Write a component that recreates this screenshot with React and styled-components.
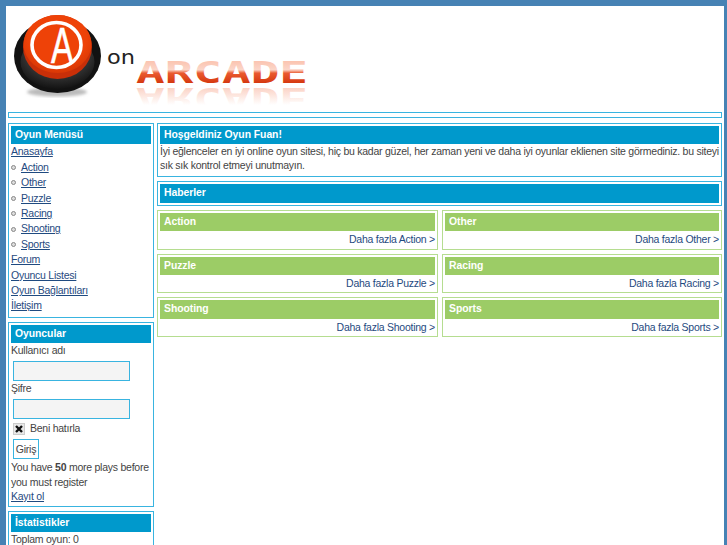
import React from 'react'
import styled, { createGlobalStyle } from 'styled-components'

const Global = createGlobalStyle`
  html, body { margin: 0; padding: 0; height: 545px; overflow: hidden; background: #4682b4; }
  body { font-family: "Liberation Sans", Arial, sans-serif; font-size: 10.5px; letter-spacing: -0.25px; line-height: 15.4px; color: #444; }
  a { color: #1f4a80; }
`

const Page = styled.div`
  margin: 6px 3px 0 6px;
  padding: 0 2px;
  background: #fff;
  height: 600px;
`
const Logo = styled.svg`
  display: block;
  width: 312px;
  height: 106px;
  letter-spacing: 0;
`
const Bar = styled.div`
  height: 4px;
  border: 1px solid #39b4e0;
  margin-bottom: 5px;
`
const Columns = styled.div`
  display: grid;
  grid-template-columns: 146px 1fr;
  column-gap: 3px;
  align-items: start;
`
const Stack = styled.div`
  display: flex;
  flex-direction: column;
  gap: 4px;
`
const Box = styled.section`
  border: 1px solid ${p => (p.$green ? '#b5dd90' : '#39b4e0')};
  padding: 2px;
`
const BoxTitle = styled.h3`
  margin: 0;
  height: 18.4px;
  padding: 0 4px;
  font-size: 10.4px;
  line-height: 17.4px;
  font-weight: bold;
  letter-spacing: -0.05px;
  color: #fff;
  background: ${p => (p.$green ? '#9ccc66' : '#0099cc')};
`
const Body = styled.div`
  padding: 0 0 1.2px;
`
const LoginBody = styled.div`
  padding: 0;
`
const MenuLink = styled.a`
  display: block;
  text-decoration: underline;
`
const SubItem = styled.div`
  display: flex;
  align-items: center;
  &::before {
    content: '';
    box-sizing: border-box;
    width: 5px;
    height: 5px;
    border: 1px solid #888;
    border-radius: 50%;
    background: #ddd;
    margin-right: 5px;
  }
  a { text-decoration: underline; }
`
const Field = styled.input`
  display: block;
  box-sizing: border-box;
  width: 117px;
  height: 20px;
  margin: 2.4px 0 0 2px;
  padding: 0;
  border: 1px solid #39b4e0;
  background: #f4f4f4;
  outline: none;
`
const Remember = styled.div`
  display: flex;
  align-items: center;
  height: 12px;
  margin: 4px 0 0 2px;
  gap: 5px;
`
const Check = styled.span`
  width: 12px;
  height: 12px;
  background: #e8e8e8;
  border: 1px solid #ccc;
  box-sizing: border-box;
  display: flex;
  align-items: center;
  justify-content: center;
  svg { display: block; }
`
const Submit = styled.button`
  display: block;
  box-sizing: border-box;
  width: 26px;
  height: 20px;
  margin: 4px 0 1px 2px;
  padding: 0;
  border: 1px solid #39b4e0;
  background: #fff;
  color: #444;
  font: 10.5px "Liberation Sans", Arial, sans-serif;
  letter-spacing: -0.25px;
`
const Note = styled.div`
  line-height: 14.5px;
`
const Welcome = styled.p`
  margin: 0;
  padding: 0 0 2px;
  line-height: 14px;
`
const Grid = styled.div`
  display: grid;
  grid-template-columns: 281px 1fr;
  gap: 4px;
`
const More = styled.div`
  text-align: right;
  height: 15.4px;
  line-height: 17px;
  color: #1f4a80;
  a { text-decoration: none; }
`

const games = ['Action', 'Other', 'Puzzle', 'Racing', 'Shooting', 'Sports']

const App = () => {
  return (
    <Page>
      <Global />
      <Logo viewBox="8 6 312 106">
        <defs>
          <linearGradient id="arc" gradientUnits="userSpaceOnUse" x1="0" y1="61" x2="0" y2="83">
            <stop offset="0" stopColor="#fbc4b0" />
            <stop offset="0.4" stopColor="#fbd6c9" />
            <stop offset="0.55" stopColor="#ea5a30" />
            <stop offset="1" stopColor="#d5380f" />
          </linearGradient>
          <linearGradient id="ref" gradientUnits="userSpaceOnUse" x1="0" y1="66" x2="0" y2="83">
            <stop offset="0" stopColor="#ffffff" />
            <stop offset="1" stopColor="#fbd3c6" />
          </linearGradient>
          <radialGradient id="base" cx="0.5" cy="0.35" r="0.7">
            <stop offset="0.6" stopColor="#333" />
            <stop offset="1" stopColor="#0c0c0c" />
          </radialGradient>
          <radialGradient id="cap" cx="0.5" cy="0.4" r="0.6">
            <stop offset="0.7" stopColor="#ee4208" />
            <stop offset="1" stopColor="#d93806" />
          </radialGradient>
          <filter id="blur"><feGaussianBlur stdDeviation="1.4" /></filter>
        </defs>
        <ellipse cx="57" cy="92" rx="30" ry="4.5" fill="#bbb" filter="url(#blur)" />
        <ellipse cx="57.5" cy="56" rx="43.5" ry="37" fill="#121212" />
        <ellipse cx="57.5" cy="62" rx="37" ry="27" fill="url(#base)" />
        <ellipse cx="57.5" cy="47" rx="34.5" ry="32" fill="#c92f08" />
        <ellipse cx="57.5" cy="44" rx="34" ry="29" fill="url(#cap)" />
        <ellipse cx="56.5" cy="45" rx="24.5" ry="22.5" fill="none" stroke="#fff" strokeWidth="3.6" />
        <text transform="translate(62 63) scale(0.68 1)" textAnchor="middle" fontFamily="Liberation Sans" fontSize="49" fill="#fff" stroke="#fff" strokeWidth="0.6">A</text>
        <text x="107" y="64" fontFamily="DejaVu Sans" fontSize="20" textLength="28" lengthAdjust="spacingAndGlyphs" fill="#222">on</text>
        <text x="136" y="83" fontFamily="DejaVu Sans Mono" fontWeight="bold" fontSize="30" textLength="172" lengthAdjust="spacingAndGlyphs" fill="url(#arc)">ARCADE</text>
        <text transform="translate(0 171) scale(1 -1)" x="136" y="83" fontFamily="DejaVu Sans Mono" fontWeight="bold" fontSize="30" textLength="172" lengthAdjust="spacingAndGlyphs" fill="url(#ref)" aria-hidden="true">ARCADE</text>
      </Logo>
      <Bar />
      <Columns>
        <Stack>
          <Box>
            <BoxTitle>Oyun Menüsü</BoxTitle>
            <Body>
              <MenuLink href="#">Anasayfa</MenuLink>
              {games.map(g => (
                <SubItem key={g}><a href="#">{g}</a></SubItem>
              ))}
              <MenuLink href="#">Forum</MenuLink>
              <MenuLink href="#">Oyuncu Listesi</MenuLink>
              <MenuLink href="#">Oyun Bağlantıları</MenuLink>
              <MenuLink href="#">İletişim</MenuLink>
            </Body>
          </Box>
          <Box>
            <BoxTitle>Oyuncular</BoxTitle>
            <LoginBody>
              <div>Kullanıcı adı</div>
              <Field />
              <div>Şifre</div>
              <Field type="password" />
              <Remember>
                <Check>
                  <svg width="10" height="10" viewBox="0 0 10 10"><path d="M2 2 L8 8 M8 2 L2 8" stroke="#111" strokeWidth="2.4" /></svg>
                </Check>
                Beni hatırla
              </Remember>
              <Submit>Giriş</Submit>
              <Note>You have <b>50</b> more plays before you must register</Note>
              <Note><MenuLink href="#">Kayıt ol</MenuLink></Note>
            </LoginBody>
          </Box>
          <Box>
            <BoxTitle>İstatistikler</BoxTitle>
            <LoginBody>
              <div>Toplam oyun: 0</div>
            </LoginBody>
          </Box>
        </Stack>
        <Stack>
          <Box>
            <BoxTitle>Hoşgeldiniz Oyun Fuan!</BoxTitle>
            <Welcome>İyi eğlenceler en iyi online oyun sitesi, hiç bu kadar güzel, her zaman yeni ve daha iyi oyunlar eklienen site görmediniz. bu siteyi sık sık kontrol etmeyi unutmayın.</Welcome>
          </Box>
          <Box>
            <BoxTitle>Haberler</BoxTitle>
          </Box>
          <Grid>
            {games.map(g => (
              <Box $green key={g}>
                <BoxTitle $green>{g}</BoxTitle>
                <More><a href="#">Daha fazla {g} &gt;</a></More>
              </Box>
            ))}
          </Grid>
        </Stack>
      </Columns>
    </Page>
  )
}

export default App
